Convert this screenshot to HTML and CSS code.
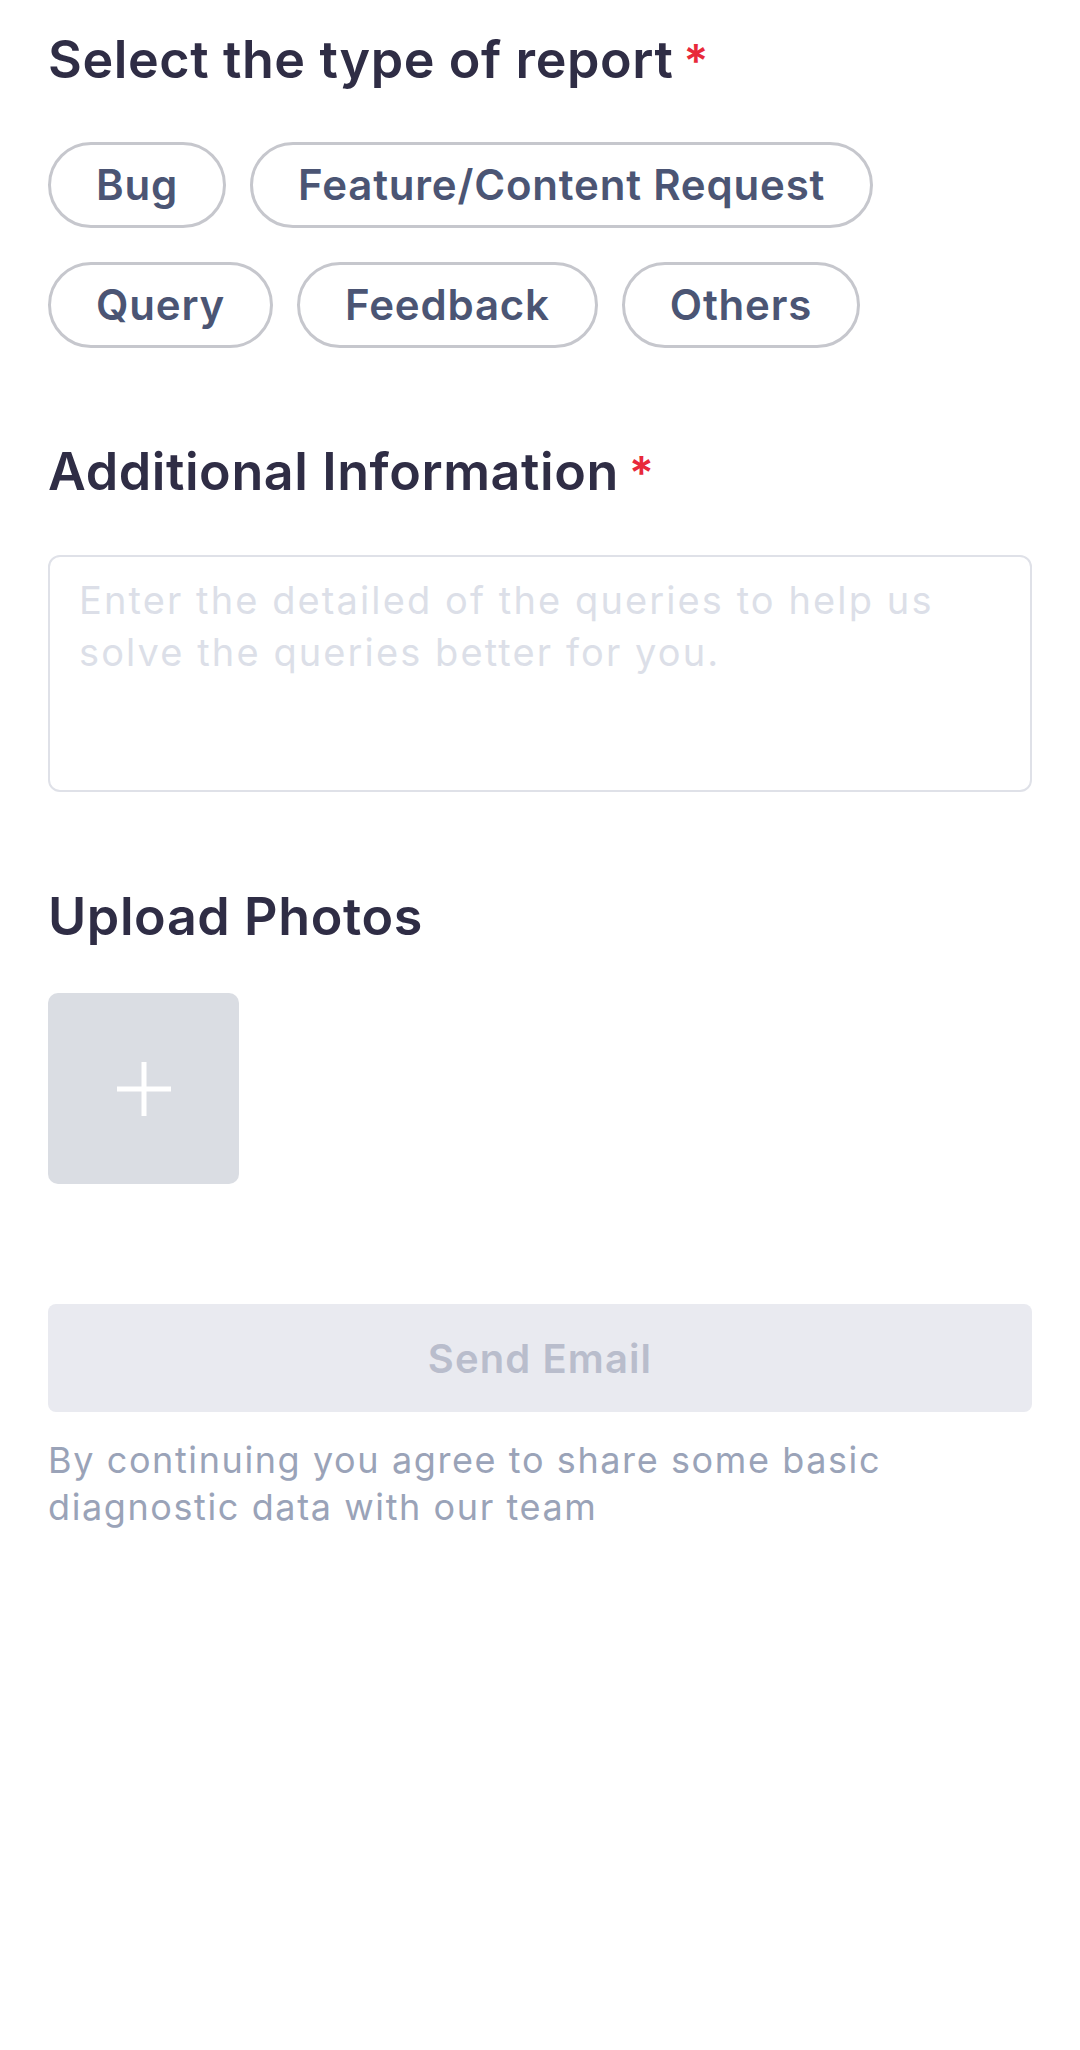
FILE: index.html
```html
<!DOCTYPE html>
<html lang="en">
<head>
<meta charset="utf-8">
<title>Report</title>
<link rel="stylesheet" href="styles.css">
</head>
<body>
<main class="form">
  <section class="field">
    <h2 class="label label-first">Select the type of report<span class="req">*</span></h2>
    <div class="chips">
      <button class="chip">Bug</button>
      <button class="chip">Feature/Content Request</button>
      <button class="chip">Query</button>
      <button class="chip">Feedback</button>
      <button class="chip">Others</button>
    </div>
  </section>
  <section class="field">
    <h2 class="label label-info">Additional Information<span class="req">*</span></h2>
    <textarea class="details" placeholder="Enter the detailed of the queries to help us solve the queries better for you."></textarea>
  </section>
  <section class="field">
    <h2 class="label label-upload">Upload Photos</h2>
    <button class="upload" aria-label="Add photo">
      <svg width="54" height="54" viewBox="0 0 54 54"><path d="M27 0V54M0 27H54" stroke="#ffffff" stroke-width="5"/></svg>
    </button>
  </section>
  <button class="send">Send Email</button>
  <p class="note">By continuing you agree to share some basic diagnostic data with our team</p>
</main>
</body>
</html>
```
FILE: styles.css
```css
* { box-sizing: border-box; }
html, body { margin: 0; padding: 0; background: #ffffff; }
.form {
  padding: 30px 48px 0;
  font-family: "Inter", "Noto Sans", sans-serif;
}
.label {
  margin: 0;
  font-size: 52px;
  line-height: 60px;
  font-weight: 600;
  color: #2f2d45;
  letter-spacing: 0.6px;
}
.req {
  color: #e8293a;
  margin-left: 10px;
  font-size: 46px;
}
.label-info { margin-top: 94px; }
.label-upload { margin-top: 95px; }
.chips {
  margin-top: 51px;
  display: flex;
  flex-wrap: wrap;
  column-gap: 24px;
  row-gap: 34px;
  max-width: 900px;
}
.chip {
  height: 86px;
  padding: 0 45px;
  border: 3px solid #c6c7cd;
  border-radius: 43px;
  background: #ffffff;
  font-family: inherit;
  font-size: 42px;
  font-weight: 600;
  letter-spacing: 0.8px;
  color: #4b5574;
  line-height: 80px;
}
.details {
  display: block;
  margin-top: 52px;
  width: 100%;
  height: 237px;
  padding: 17px 29px;
  border: 2.5px solid #dfe1e8;
  border-radius: 12px;
  resize: none;
  outline: none;
  font-family: "Inter", "Roboto", sans-serif;
  font-size: 38px;
  line-height: 52px;
  letter-spacing: 2.1px;
  color: #2f2d45;
}
.details::placeholder { color: #dcdfe8; }
.upload {
  display: flex;
  align-items: center;
  justify-content: center;
  margin-top: 46px;
  width: 191px;
  height: 191px;
  border: none;
  border-radius: 10px;
  background: #dadde3;
  padding: 0;
}
.send {
  display: block;
  margin-top: 120px;
  width: 100%;
  height: 108px;
  border: none;
  border-radius: 8px;
  background: #e9eaf0;
  font-family: inherit;
  font-size: 40px;
  font-weight: 600;
  letter-spacing: 1.1px;
  color: #b9bdcc;
}
.note {
  margin: 25px 0 0;
  font-family: "Inter", "Roboto", sans-serif;
  font-size: 36px;
  line-height: 47px;
  letter-spacing: 1.6px;
  color: #9aa3b8;
  max-width: 900px;
}
```
